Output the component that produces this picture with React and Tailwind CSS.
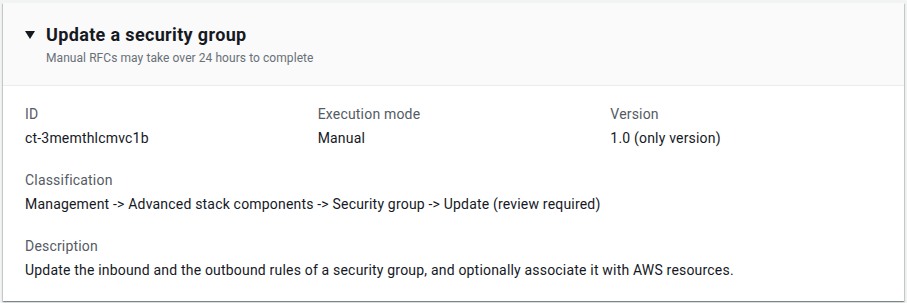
const fields = [
  { label: "ID", value: "ct-3memthlcmvc1b" },
  { label: "Execution mode", value: "Manual" },
  { label: "Version", value: "1.0 (only version)" },
];

function Field({ label, value }) {
  return (
    <div className="flex flex-col gap-1 tracking-[0.19px]">
      <div className="text-[14px] leading-5 text-[#545b64]">{label}</div>
      <div className="text-[14px] leading-5 text-[#16191f]">{value}</div>
    </div>
  );
}

export default function App() {
  return (
    <div
      className="w-[907px] h-[303px] bg-[#f2f3f3] p-[3px] pb-[1px]"
      style={{ fontFamily: "Roboto, 'Liberation Sans', sans-serif" }}
    >
      <div className="h-[298px] bg-white shadow-[0_1px_1px_0_rgba(0,28,36,0.3),1px_1px_1px_0_rgba(0,28,36,0.15),-1px_1px_1px_0_rgba(0,28,36,0.15)]">
        <div className="bg-[#fafafa] border-b border-[#eaeded] px-[22px] pt-[21px] pb-[19px]">
          <div className="flex items-center gap-[11px] h-[22px]">
            <svg width="10" height="8" viewBox="0 0 10 8" className="shrink-0">
              <polygon points="0,0 10,0 5,8" fill="#16191f" />
            </svg>
            <h2 className="text-[18px] font-bold leading-[22px] tracking-[0.35px] text-[#16191f]">
              Update a security group
            </h2>
          </div>
          <p className="mt-1 pl-[21px] text-[12px] leading-4 tracking-[0.07px] text-[#687078]">
            Manual RFCs may take over 24 hours to complete
          </p>
        </div>
        <div className="flex flex-col gap-[22px] px-[22px] pt-[18px] pb-5">
          <div className="grid grid-cols-3 gap-x-[21px]">
            {fields.map((f) => (
              <Field key={f.label} label={f.label} value={f.value} />
            ))}
          </div>
          <Field
            label="Classification"
            value="Management -> Advanced stack components -> Security group -> Update (review required)"
          />
          <Field
            label="Description"
            value="Update the inbound and the outbound rules of a security group, and optionally associate it with AWS resources."
          />
        </div>
      </div>
    </div>
  );
}
